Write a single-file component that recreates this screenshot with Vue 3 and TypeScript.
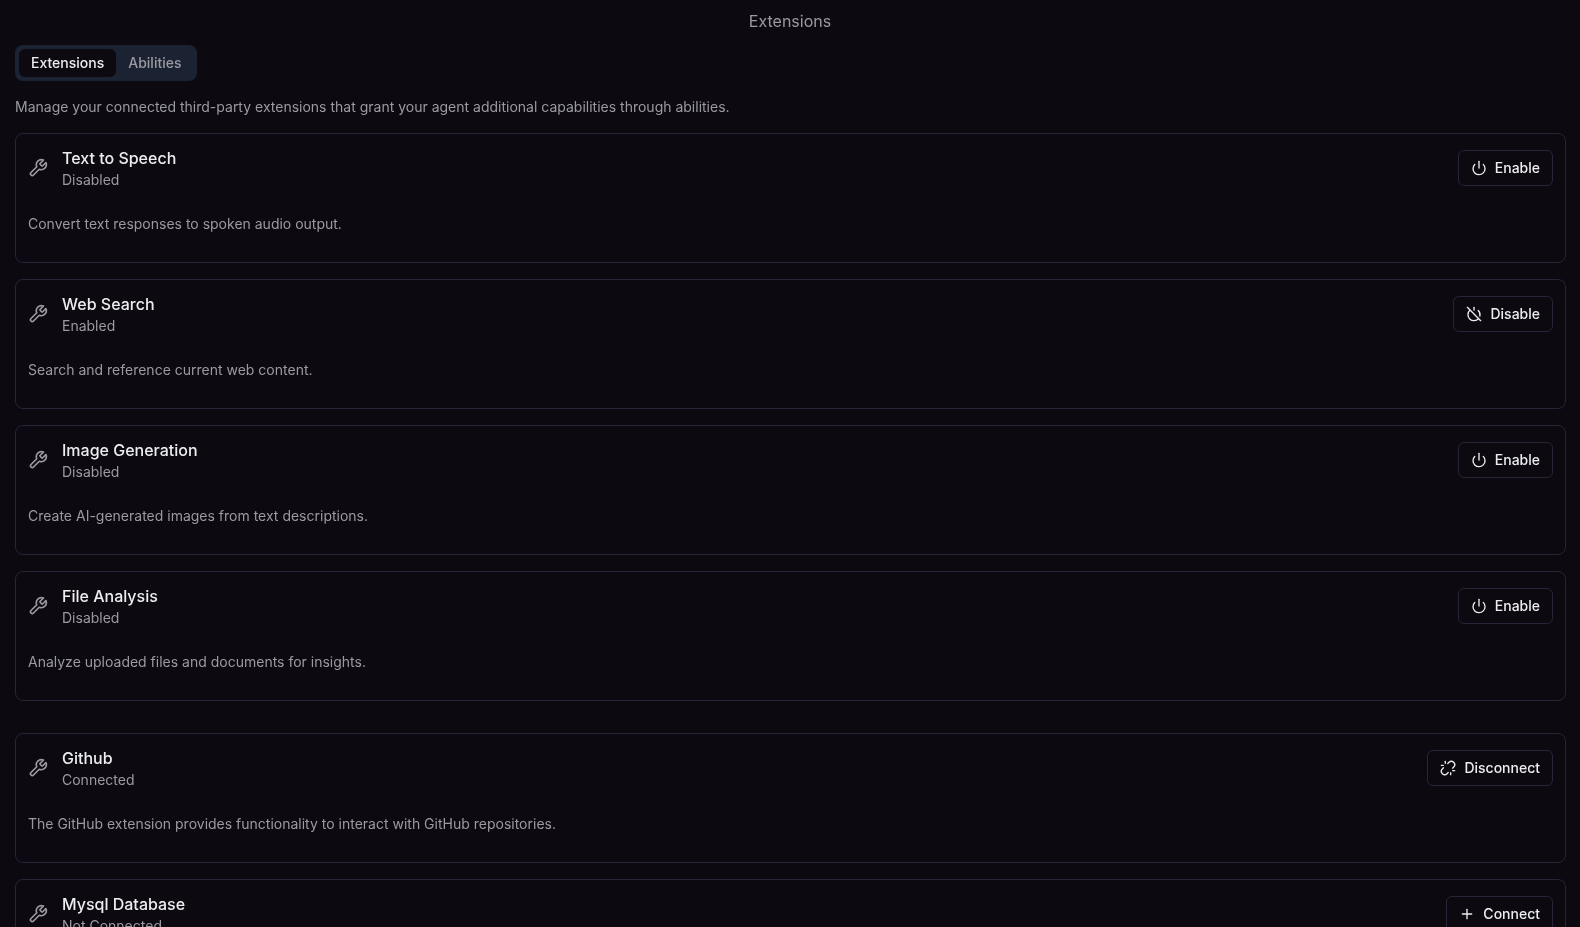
<script setup lang="ts">
type ActionKind = "enable" | "disable" | "disconnect" | "connect";

interface Extension {
  name: string;
  status: string;
  description: string;
  action: ActionKind;
}

const actionLabels: Record<ActionKind, string> = {
  enable: "Enable",
  disable: "Disable",
  disconnect: "Disconnect",
  connect: "Connect",
};

const builtIn: Extension[] = [
  { name: "Text to Speech", status: "Disabled", description: "Convert text responses to spoken audio output.", action: "enable" },
  { name: "Web Search", status: "Enabled", description: "Search and reference current web content.", action: "disable" },
  { name: "Image Generation", status: "Disabled", description: "Create AI-generated images from text descriptions.", action: "enable" },
  { name: "File Analysis", status: "Disabled", description: "Analyze uploaded files and documents for insights.", action: "enable" },
];

const thirdParty: Extension[] = [
  { name: "Github", status: "Connected", description: "The GitHub extension provides functionality to interact with GitHub repositories.", action: "disconnect" },
  { name: "Mysql Database", status: "Not Connected", description: "Connect to and query a MySQL database.", action: "connect" },
];

const groups = [builtIn, thirdParty];
</script>

<template>
  <div class="page">
    <header class="top">Extensions</header>
    <main class="content">
      <div class="tabs">
        <button class="tab active">Extensions</button>
        <button class="tab">Abilities</button>
      </div>
      <p class="intro">
        Manage your connected third-party extensions that grant your agent additional capabilities through abilities.
      </p>
      <div class="groups">
        <section v-for="(group, i) in groups" :key="i" class="group">
          <article v-for="ext in group" :key="ext.name" class="card">
            <div class="card-head">
              <svg class="wrench" viewBox="0 0 24 24">
                <path d="M14.7 6.3a1 1 0 0 0 0 1.4l1.6 1.6a1 1 0 0 0 1.4 0l3.77-3.77a6 6 0 0 1-7.94 7.94l-6.91 6.91a2.12 2.12 0 0 1-3-3l6.91-6.91a6 6 0 0 1 7.94-7.94l-3.76 3.76z" />
              </svg>
              <div class="titles">
                <h3>{{ ext.name }}</h3>
                <span>{{ ext.status }}</span>
              </div>
              <button class="action">
                <svg viewBox="0 0 24 24">
                  <template v-if="ext.action === 'enable'">
                    <path d="M12 2v10" />
                    <path d="M18.4 6.6a9 9 0 1 1-12.77.04" />
                  </template>
                  <template v-else-if="ext.action === 'disable'">
                    <path d="M18.36 6.64A9 9 0 0 1 20.77 15" />
                    <path d="M6.16 6.16a9 9 0 1 0 12.68 12.68" />
                    <path d="M12 2v4" />
                    <path d="m2 2 20 20" />
                  </template>
                  <template v-else-if="ext.action === 'disconnect'">
                    <path d="m18.84 12.25 1.72-1.71h-.02a5.004 5.004 0 0 0-.12-7.07 5.006 5.006 0 0 0-6.95 0l-1.72 1.71" />
                    <path d="m5.17 11.75-1.71 1.71a5.004 5.004 0 0 0 .12 7.07 5.006 5.006 0 0 0 6.95 0l1.71-1.71" />
                    <path d="M8 2v3" />
                    <path d="M2 8h3" />
                    <path d="M16 19v3" />
                    <path d="M19 16h3" />
                  </template>
                  <template v-else>
                    <path d="M5 12h14" />
                    <path d="M12 5v14" />
                  </template>
                </svg>
                {{ actionLabels[ext.action] }}
              </button>
            </div>
            <p class="desc">{{ ext.description }}</p>
          </article>
        </section>
      </div>
    </main>
  </div>
</template>

<style>
html,
body {
  margin: 0;
  height: 100%;
  overflow: hidden;
  background: #0c0a10;
}
</style>

<style scoped>
.page {
  height: 100vh;
  overflow: hidden;
  /* own transparent layer so text gets the same grayscale antialiasing */
  will-change: transform;
  color: #ededf0;
  font-family: Inter, "Liberation Sans", sans-serif;
  font-size: 14px;
  line-height: 20px;
}

.top {
  height: 42px;
  display: flex;
  align-items: center;
  justify-content: center;
  font-size: 16px;
  line-height: 24px;
  color: #9c9aa1;
}

.content {
  padding: 3px 14px 0 15px;
}

.tabs {
  display: inline-flex;
  padding: 4px;
  height: 36px;
  box-sizing: border-box;
  border-radius: 8px;
  background: #1b2232;
  vertical-align: top;
}

.tab {
  height: 28px;
  padding: 0 12px;
  border: 0;
  border-radius: 6px;
  background: transparent;
  color: #9c9aa1;
  font: 500 14px/20px Inter, "Liberation Sans", sans-serif;
}

.tab.active {
  background: #0c0a10;
  color: #ededf0;
}

.intro {
  margin: 16px 0;
  color: #9c9aa1;
}

.groups,
.group {
  display: flex;
  flex-direction: column;
}

.groups {
  gap: 32px;
}

.group {
  gap: 16px;
}

.card {
  height: 130px;
  box-sizing: border-box;
  padding: 12px;
  border: 1px solid #2a233a;
  border-radius: 8px;
}

.card-head {
  display: flex;
  align-items: center;
  gap: 14px;
}

.wrench {
  width: 20px;
  height: 20px;
  flex: none;
  fill: none;
  stroke: #9c9aa1;
  stroke-width: 2;
  stroke-linecap: round;
  stroke-linejoin: round;
}

.titles {
  flex: 1;
  display: flex;
  flex-direction: column;
}

.titles h3 {
  margin: 0;
  font-size: 16px;
  line-height: 24px;
  font-weight: 500;
  color: #ededf0;
}

.titles span {
  color: #9c9aa1;
}

.action {
  display: inline-flex;
  align-items: center;
  gap: 8px;
  height: 36px;
  padding: 0 12px;
  border: 1px solid #2a233a;
  border-radius: 6px;
  background: transparent;
  color: #ededf0;
  font: 500 14px/20px Inter, "Liberation Sans", sans-serif;
}

.action svg {
  width: 16px;
  height: 16px;
  fill: none;
  stroke: currentColor;
  stroke-width: 2;
  stroke-linecap: round;
  stroke-linejoin: round;
}

.desc {
  margin: 24px 0 0;
  color: #9c9aa1;
}
</style>
